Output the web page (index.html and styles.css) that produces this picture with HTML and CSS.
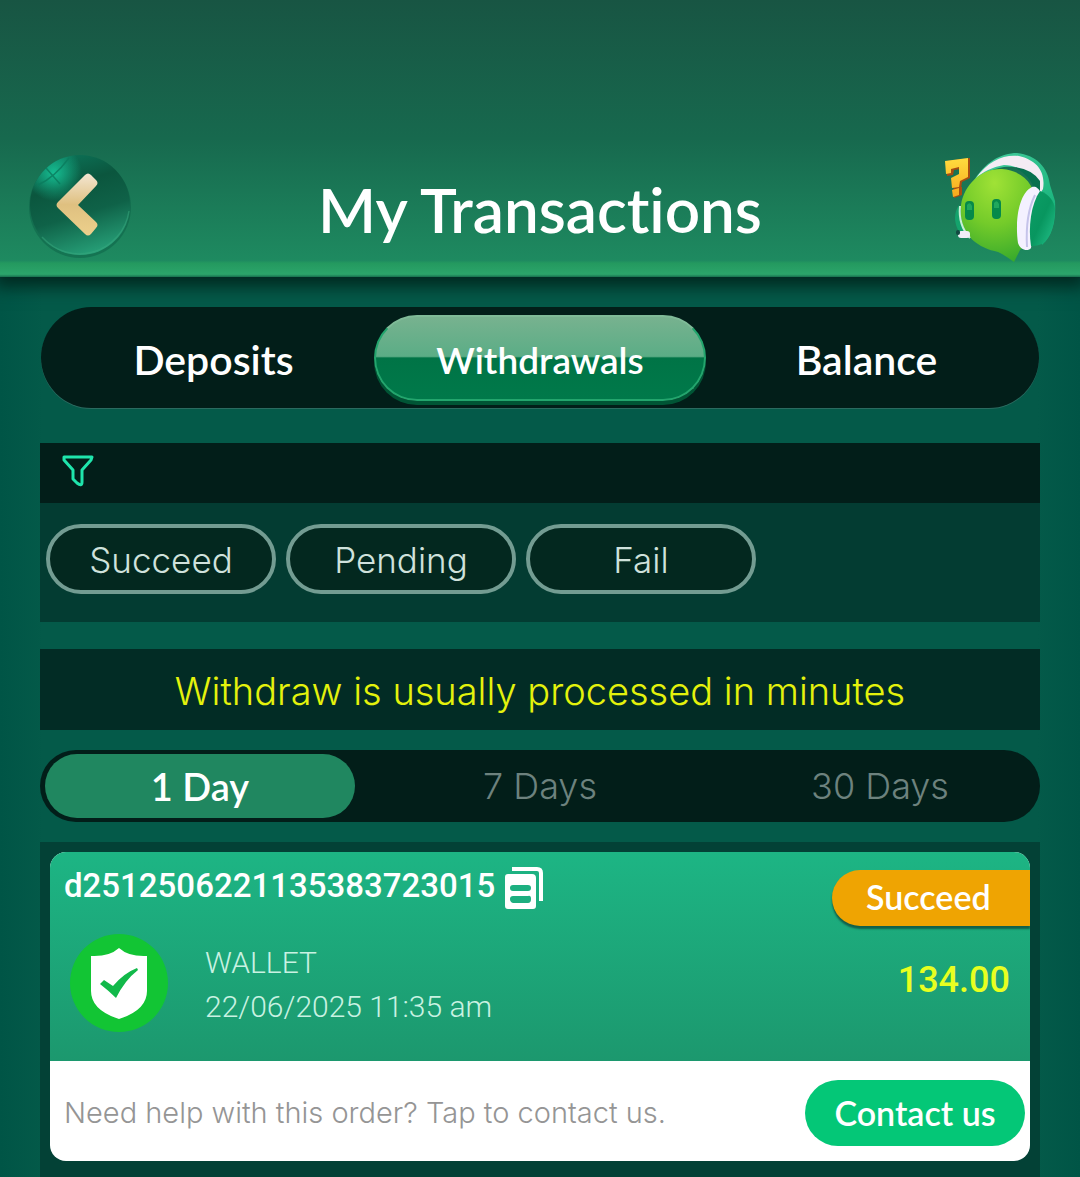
FILE: index.html
```html
<!DOCTYPE html>
<html lang="en">
<head>
<meta charset="utf-8">
<meta name="viewport" content="width=device-width, initial-scale=1">
<title>My Transactions</title>
<link rel="stylesheet" href="styles.css">
</head>
<body>
<header class="header">
  <button class="icon-button" type="button" aria-label="Back">
    <svg width="104" height="108" viewBox="0 0 104 108" aria-hidden="true">
      <defs>
        <linearGradient id="orb" x1="0.3" y1="0" x2="0.6" y2="1">
          <stop offset="0" stop-color="#0c7257"/>
          <stop offset="0.3" stop-color="#0b563e"/>
          <stop offset="0.6" stop-color="#0f6248"/>
          <stop offset="1" stop-color="#27a078"/>
        </linearGradient>
        <radialGradient id="glint" cx="0.24" cy="0.18" r="0.28">
          <stop offset="0" stop-color="#17c79a" stop-opacity="0.9"/>
          <stop offset="1" stop-color="#17c79a" stop-opacity="0"/>
        </radialGradient>
        <linearGradient id="gold" x1="0" y1="0" x2="0" y2="1">
          <stop offset="0" stop-color="#f3e6d2"/>
          <stop offset="0.5" stop-color="#dfc080"/>
          <stop offset="1" stop-color="#ecd08c"/>
        </linearGradient>
      </defs>
      <circle cx="52" cy="54" r="51" fill="#0c5f45" opacity="0.5"/>
      <circle cx="52" cy="52" r="50" fill="url(#orb)"/>
      <circle cx="52" cy="52" r="50" fill="url(#glint)"/>
      <path d="M18 15 32 31M10 32Q26 25 41 5" fill="none" stroke="#0a7a5d" stroke-width="1.5" opacity="0.8"/>
      <path d="M14 84A50 50 0 0 0 101 58" fill="none" stroke="#38a87e" stroke-width="1.5" opacity="0.5"/>
      <path d="M57 22q3-3 6 0l5 5q3 3 0 6L50 52l18 17q3 3 0 6l-5 6q-3 3-6 0L30 55q-3-3 0-6Z" fill="url(#gold)"/>
    </svg>
  </button>
  <h1 class="title">My Transactions</h1>
  <button class="icon-button" type="button" aria-label="Customer support">
    <svg width="112" height="112" viewBox="0 0 112 112" aria-hidden="true">
      <defs>
        <radialGradient id="face" cx="0.45" cy="0.15" r="0.9">
          <stop offset="0" stop-color="#a0e236"/>
          <stop offset="0.5" stop-color="#74cb2a"/>
          <stop offset="1" stop-color="#34a82c"/>
        </radialGradient>
        <linearGradient id="cup" x1="0" y1="0" x2="1" y2="1">
          <stop offset="0" stop-color="#0c9e66"/>
          <stop offset="0.5" stop-color="#08965f"/>
          <stop offset="1" stop-color="#25c38c"/>
        </linearGradient>
        <linearGradient id="band" x1="0" y1="0" x2="1" y2="1">
          <stop offset="0" stop-color="#48cfa0"/>
          <stop offset="1" stop-color="#0fae74"/>
        </linearGradient>
        <linearGradient id="mark" x1="0" y1="0" x2="0" y2="1">
          <stop offset="0" stop-color="#ffdc3f"/>
          <stop offset="1" stop-color="#f7a91c"/>
        </linearGradient>
      </defs>
      <path d="M29 31C41 11 57 2 73 2 92 4 104 16 106 34L111 50C112 66 110 84 98 94L88 50 97 40C92 22 76 14 60 16 46 18 37 24 29 31Z" fill="url(#band)"/>
      <path d="M32 27C44 10 60 3 75 5 92 9 102 20 99 38L96 43C88 22 73 14 60 14 48 16 39 21 32 27Z" fill="#f4ecf4"/>
      <path d="M70 16Q88 18 96 30V42L90 38Q86 24 70 16Z" fill="#08704f"/>
      <path d="M15 54q-8 12 0 27 8 3 6-9Z" fill="#14a36c"/>
      <path d="M17 54C20 33 38 17 58 18 80 20 92 34 92 56 92 76 86 92 76 99L70 111C66 108 62 105 54 101 34 97 14 84 17 54Z" fill="url(#face)"/>
      <path d="M16 55q-2 19 10 32" fill="none" stroke="#c9efd6" stroke-width="2"/>
      <rect x="14" y="80" width="12" height="7" rx="3" fill="#f0edf7"/>
      <rect x="12" y="79" width="4" height="5" rx="2" fill="#124a42"/>
      <rect x="21" y="50" width="9" height="19" rx="4" fill="#06894a"/>
      <rect x="48" y="48" width="9" height="20" rx="4" fill="#06894a"/>
      <path d="M23 54q3-4 5 1v4h-5ZM50 52q3-4 5 1v4h-5Z" fill="#20a85c"/>
      <path d="M88 36C74 43 71 72 74 92 76 99 84 101 87 97 90 78 91 60 97 42 94 36 91 35 88 36Z" fill="#f4f1ff"/>
      <path d="M91 44C84 58 82 78 83 96" fill="none" stroke="#c5c3ea" stroke-width="2"/>
      <path d="M96 40C87 53 84 76 87 95 104 96 110 80 111 58 110 50 105 43 96 40Z" fill="url(#cup)"/>
      <path d="M3 10 26 7V27L18 31 17 38 10 39 8 28 17 24V18L10 19 9 24 3 25ZM9 38 18 36V44L10 47Z" fill="#a84c11"/>
      <path d="M1 10 24 7V26L16 30 15 36 8 37 7 27 15 23V16L7 18V22L2 23ZM8 39 15 37V44L9 46Z" fill="url(#mark)"/>
    </svg>
  </button>
</header>

<main class="content">
  <nav class="tabs" aria-label="Transaction type">
    <button class="tab" type="button">Deposits</button>
    <button class="tab tab-active" type="button" aria-current="page">Withdrawals</button>
    <button class="tab" type="button">Balance</button>
  </nav>

  <section class="filters" aria-label="Filters">
    <div class="filters-head">
      <svg width="34" height="36" viewBox="0 0 34 36" aria-hidden="true">
        <path d="M4 4H32L31 7 22 17V29Q22 34 17 30L13 26V17L4 7Z" fill="none" stroke="#1fe5ac" stroke-width="3" stroke-linejoin="round"/>
      </svg>
    </div>
    <div class="chips">
      <button class="chip" type="button">Succeed</button>
      <button class="chip" type="button">Pending</button>
      <button class="chip" type="button">Fail</button>
    </div>
  </section>

  <p class="notice">Withdraw is usually processed in minutes</p>

  <div class="periods" role="group" aria-label="Period">
    <button class="period period-active" type="button" aria-pressed="true">1 Day</button>
    <button class="period" type="button" aria-pressed="false">7 Days</button>
    <button class="period" type="button" aria-pressed="false">30 Days</button>
  </div>

  <section class="orders">
    <article class="order">
      <div class="order-top">
        <div class="order-info">
          <div class="order-id">
            <span>d2512506221135383723015</span>
            <button class="icon-button" type="button" aria-label="Copy order number">
              <svg width="38" height="42" viewBox="0 0 38 42" aria-hidden="true">
                <path d="M7 2H32Q36 2 36 6V34" fill="none" stroke="#fff" stroke-width="4"/>
                <path fill="#fff" fill-rule="evenodd" d="M3 7H27Q31 7 31 11V39Q31 42 28 42H3Q0 42 0 39V10Q0 7 3 7ZM8 18Q5 18 5 21T8 24H23Q26 24 26 21T23 18ZM8 29Q5 29 5 32T8 36H23Q26 36 26 32T23 29Z"/>
              </svg>
            </button>
          </div>
          <div class="order-body">
            <svg width="100" height="100" viewBox="0 0 100 100" aria-hidden="true">
              <circle cx="50" cy="50" r="49" fill="#12c534"/>
              <path d="M50 15Q60 24 78 23V58Q78 77 50 86 22 77 22 58V23Q40 24 50 15Z" fill="#fff"/>
              <path d="m31 51 4-4 9 6Q55 40 68 35l1 2Q56 47 47 65Q40 58 31 51Z" fill="#12b94a"/>
            </svg>
            <div class="order-meta">
              <span>WALLET</span>
              <time datetime="2025-06-22T11:35">22/06/2025 11:35 am</time>
            </div>
          </div>
        </div>
        <div class="order-side">
          <span class="status">Succeed</span>
          <strong class="amount">134.00</strong>
        </div>
      </div>
      <footer class="order-help">
        <span>Need help with this order? Tap to contact us.</span>
        <button class="contact" type="button">Contact us</button>
      </footer>
    </article>
  </section>
</main>
</body>
</html>
```
FILE: styles.css
```css
* {
  box-sizing: border-box;
}

body {
  margin: 0;
  min-height: 100vh;
  display: flex;
  flex-direction: column;
  background: linear-gradient(90deg, #005546, #045a49 4%, #045a49 96%, #005546);
  color: #fff;
  font-family: Lato, "Noto Sans", sans-serif;
  font-variant-ligatures: none;
}

button {
  margin: 0;
  padding: 0;
  border: 0;
  background: none;
  color: inherit;
  font: inherit;
  cursor: pointer;
}

svg {
  display: block;
}

.header {
  display: flex;
  align-items: center;
  justify-content: space-between;
  padding: 151px 24px 14px 28px;
  background: linear-gradient(#185543, #17694e 50%, #1e8a60 94%, #24995f 95%, #2ba56b 99%, #17704f);
  box-shadow: 0 4px 16px 6px #002a21;
}

.icon-button {
  flex: none;
}

.title {
  margin: 0;
  padding: 4px 0 0 4px;
  font-size: 62px;
  line-height: 72px;
  font-weight: 600;
}

.content {
  flex: 1;
  display: flex;
  flex-direction: column;
  padding: 30px 40px 0;
}

.tabs {
  display: grid;
  grid-template-columns: 1fr 332px 1fr;
  height: 101px;
  margin: 0 1px;
  padding: 8px 12px 4px;
  border-radius: 51px;
  background: #021e19;
  box-shadow: 0 1px 0 #2b6b60;
}

.tab {
  height: 90px;
  font-size: 41px;
  line-height: 52px;
  font-weight: 600;
}

.tab-active {
  height: 86px;
  padding-top: 4px;
  border: 2px solid #23a56d;
  border-top-color: #7fbb98;
  border-radius: 43px;
  background: linear-gradient(#77b28f, #5bad86 48%, #007446 50%, #00794a);
  box-shadow: 0 4px 0 #005535;
  font-size: 37px;
}

.filters {
  margin-top: 35px;
  background: #033c32;
}

.filters-head {
  height: 60px;
  padding: 10px 20px;
  background: #021e19;
}

.chips {
  display: flex;
  gap: 10px;
  padding: 21px 6px 28px;
}

.chip {
  width: 230px;
  height: 70px;
  padding-top: 2px;
  border: 4px solid #739c92;
  border-radius: 35px;
  background: #03281f;
  color: #d0e2dc;
  font-family: Inter, sans-serif;
  font-size: 35px;
  font-weight: 300;
}

.notice {
  margin: 27px 0 20px;
  padding: 16px 0 12px;
  background: #022c25;
  color: #e4f20c;
  text-align: center;
  font-family: Inter, sans-serif;
  font-size: 38px;
  line-height: 53px;
  font-weight: 300;
}

.periods {
  display: grid;
  grid-template-columns: repeat(3, 1fr);
  gap: 30px;
  height: 72px;
  padding: 4px 5px;
  border-radius: 36px;
  background: #021e19;
  color: #6d827e;
}

.period {
  height: 64px;
  border-radius: 32px;
  font-family: Inter, sans-serif;
  font-size: 36px;
  font-weight: 300;
}

.period-active {
  background: #208760;
  color: #fff;
  font-family: Lato, sans-serif;
  font-size: 38px;
  font-weight: 600;
}

.orders {
  flex: 1;
  margin-top: 20px;
  padding: 10px 10px 16px;
  background: #034136;
}

.order {
  overflow: hidden;
  border-radius: 16px;
  background: #fff;
}

.order-top {
  display: flex;
  justify-content: space-between;
  height: 209px;
  background: linear-gradient(#1db584, #1c986e);
}

.order-info {
  padding: 14px 0 0 14px;
}

.order-id {
  display: flex;
  align-items: center;
  gap: 10px;
  height: 44px;
  font-family: Roboto, sans-serif;
  font-size: 33px;
  line-height: 40px;
  font-weight: 500;
}

.order-id span {
  padding-bottom: 4px;
}

.order-body {
  display: flex;
  gap: 36px;
  padding: 23px 0 0 5px;
}

.order-meta {
  display: flex;
  flex-direction: column;
  padding-top: 8px;
  color: #c9f2e2;
  font-family: Roboto, sans-serif;
  font-size: 30px;
  line-height: 44px;
  font-weight: 300;
}

.order-side {
  display: flex;
  flex-direction: column;
  align-items: flex-end;
  padding-top: 18px;
}

.status {
  width: 198px;
  height: 56px;
  padding-left: 34px;
  border-radius: 28px 0 0 28px;
  background: #efa402;
  box-shadow: 0 3px 2px #12604a;
  font-size: 34px;
  line-height: 54px;
  font-weight: 600;
}

.amount {
  padding: 32px 20px 0 0;
  color: #e8ff20;
  font-family: Roboto, sans-serif;
  font-size: 36px;
  line-height: 44px;
  font-weight: 500;
}

.order-help {
  display: flex;
  align-items: center;
  justify-content: space-between;
  height: 100px;
  padding: 3px 5px 0 14px;
  color: #959595;
  font-family: Inter, sans-serif;
  font-size: 29px;
  font-weight: 300;
}

.contact {
  width: 220px;
  height: 66px;
  border-radius: 33px;
  background: #04c777;
  color: #fff;
  font-family: Lato, sans-serif;
  font-size: 34px;
  font-weight: 600;
}
```
